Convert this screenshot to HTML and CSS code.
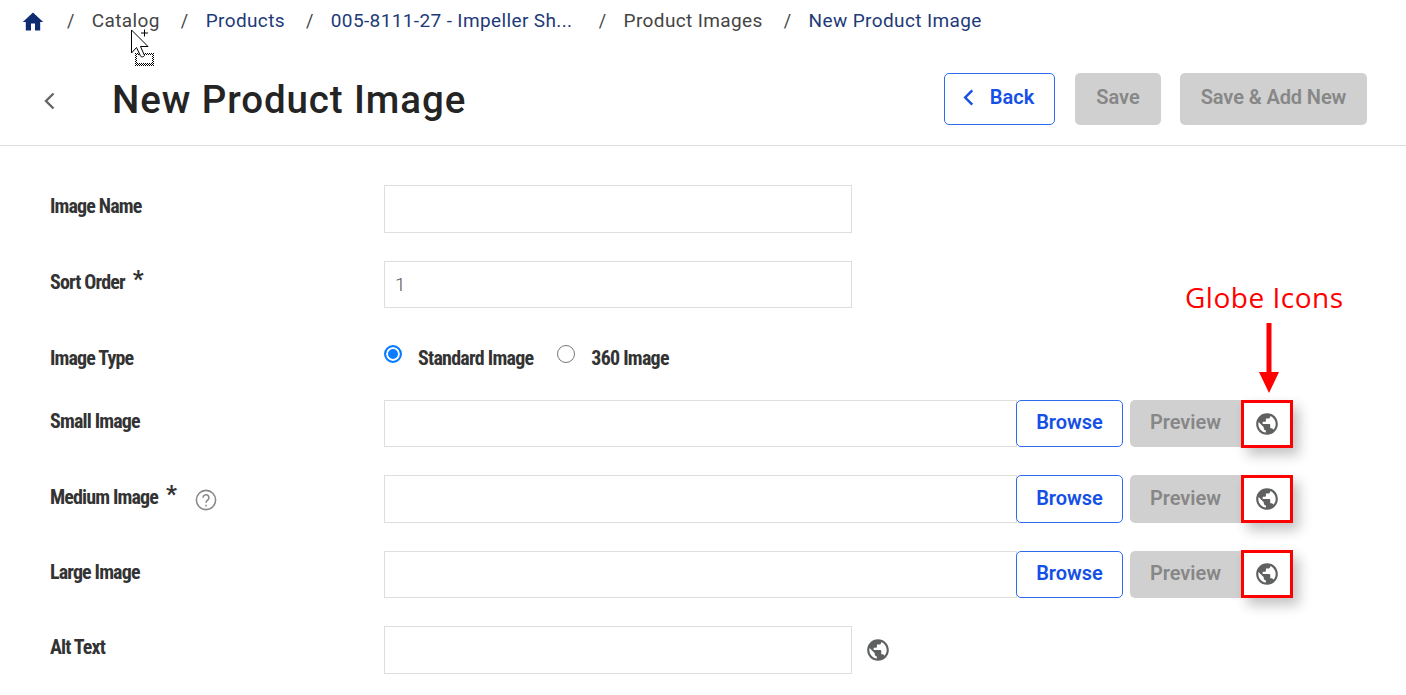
FILE: index.html
```html
<!DOCTYPE html>
<html lang="en">
<head>
<meta charset="utf-8">
<title>New Product Image</title>
<link rel="stylesheet" href="styles.css">
</head>
<body>
<nav class="crumbs">
  <svg class="home" viewBox="0 0 24 24"><path d="M10 20.500v-7h4v7h5.200v-8.500h3L12 2.500 1.800 12h3v8.500z"/></svg>
  <span class="sep sep-first">/</span>
  <span class="crumb plain">Catalog</span>
  <span class="sep">/</span>
  <a class="crumb">Products</a>
  <span class="sep">/</span>
  <a class="crumb long">005-8111-27 - Impeller Sh...</a>
  <span class="sep">/</span>
  <span class="crumb plain">Product Images</span>
  <span class="sep">/</span>
  <a class="crumb">New Product Image</a>
</nav>

<header class="head">
  <svg class="head-back" viewBox="0 0 12 18"><path d="M10 1.500 2.500 9l7.500 7.500"/></svg>
  <h1 class="title">New Product Image</h1>
  <div class="actions">
    <button class="btn btn-outline btn-back"><svg class="btn-chev" viewBox="0 0 12 18"><path d="M10 1.500 2.500 9l7.500 7.500"/></svg>Back</button>
    <button class="btn btn-off btn-save">Save</button>
    <button class="btn btn-off btn-add">Save &amp; Add New</button>
  </div>
</header>

<main class="form">
  <div class="row">
    <label class="label">Image Name</label>
    <div class="input short"></div>
  </div>
  <div class="row">
    <label class="label">Sort Order <span class="req">*</span></label>
    <div class="input short value">1</div>
  </div>
  <div class="row row-radio">
    <label class="label">Image Type</label>
    <div class="radios">
      <span class="radio on"></span><span class="radio-text first">Standard Image</span>
      <span class="radio"></span><span class="radio-text">360 Image</span>
    </div>
  </div>
  <div class="row">
    <label class="label">Small Image</label>
    <div class="input long"></div>
    <button class="btn btn-outline btn-browse">Browse</button>
    <button class="btn btn-off btn-preview">Preview</button>
    <span class="globe-box"><svg class="globe" viewBox="0 0 24 24"><path d="M12 2C6.480 2 2 6.480 2 12s4.480 10 10 10 10-4.480 10-10S17.520 2 12 2zm-1 17.930c-3.950-.490-7-3.850-7-7.930 0-.620.080-1.210.210-1.790L9 15v1c0 1.100.900 2 2 2v1.930zm6.900-2.540c-.260-.810-1-1.390-1.900-1.390h-1v-3c0-.550-.450-1-1-1H8v-2h2c.550 0 1-.450 1-1V7h2c1.100 0 2-.900 2-2v-.410c2.930 1.190 5 4.060 5 7.410 0 2.080-.800 3.970-2.100 5.390z"/></svg></span>
  </div>
  <div class="row">
    <label class="label">Medium Image <span class="req">*</span>
      <svg class="help" viewBox="0 0 24 24"><circle cx="12" cy="12" r="10.500"/><path d="M8.800 9.500a3.200 3.200 0 1 1 5 2.600c-1.200.8-1.800 1.400-1.800 3"/><path d="M12 17.200v1.800"/></svg>
    </label>
    <div class="input long"></div>
    <button class="btn btn-outline btn-browse">Browse</button>
    <button class="btn btn-off btn-preview">Preview</button>
    <span class="globe-box"><svg class="globe" viewBox="0 0 24 24"><path d="M12 2C6.480 2 2 6.480 2 12s4.480 10 10 10 10-4.480 10-10S17.520 2 12 2zm-1 17.930c-3.950-.490-7-3.850-7-7.930 0-.620.080-1.210.210-1.790L9 15v1c0 1.100.900 2 2 2v1.930zm6.900-2.540c-.260-.810-1-1.390-1.900-1.390h-1v-3c0-.550-.450-1-1-1H8v-2h2c.550 0 1-.450 1-1V7h2c1.100 0 2-.900 2-2v-.410c2.930 1.190 5 4.060 5 7.410 0 2.080-.800 3.970-2.100 5.390z"/></svg></span>
  </div>
  <div class="row">
    <label class="label">Large Image</label>
    <div class="input long"></div>
    <button class="btn btn-outline btn-browse">Browse</button>
    <button class="btn btn-off btn-preview">Preview</button>
    <span class="globe-box"><svg class="globe" viewBox="0 0 24 24"><path d="M12 2C6.480 2 2 6.480 2 12s4.480 10 10 10 10-4.480 10-10S17.520 2 12 2zm-1 17.930c-3.950-.490-7-3.850-7-7.930 0-.620.080-1.210.210-1.790L9 15v1c0 1.100.900 2 2 2v1.930zm6.900-2.540c-.260-.810-1-1.390-1.900-1.390h-1v-3c0-.550-.450-1-1-1H8v-2h2c.550 0 1-.450 1-1V7h2c1.100 0 2-.900 2-2v-.410c2.930 1.190 5 4.060 5 7.410 0 2.080-.800 3.970-2.100 5.390z"/></svg></span>
  </div>
  <div class="row">
    <label class="label">Alt Text</label>
    <div class="input short"></div>
    <svg class="globe globe-plain" viewBox="0 0 24 24"><path d="M12 2C6.480 2 2 6.480 2 12s4.480 10 10 10 10-4.480 10-10S17.520 2 12 2zm-1 17.930c-3.950-.490-7-3.850-7-7.930 0-.620.080-1.210.210-1.790L9 15v1c0 1.100.900 2 2 2v1.930zm6.900-2.540c-.260-.810-1-1.390-1.900-1.390h-1v-3c0-.550-.450-1-1-1H8v-2h2c.550 0 1-.450 1-1V7h2c1.100 0 2-.900 2-2v-.410c2.930 1.190 5 4.060 5 7.410 0 2.080-.800 3.970-2.100 5.390z"/></svg>
  </div>
</main>

<div class="note">Globe Icons</div>
<svg class="note-arrow" viewBox="0 0 22 70"><path d="M8.500 0h5v49h7.500L11 70 1 49h7.500z"/></svg>

<svg class="cursor" viewBox="0 0 26 40">
  <defs>
    <pattern id="dither" width="2" height="2" patternUnits="userSpaceOnUse">
      <rect width="1" height="1" fill="#000"/>
      <rect x="1" y="1" width="1" height="1" fill="#000"/>
    </pattern>
  </defs>
  <rect class="cursor-drag" x="4" y="24" width="19" height="13"/>
  <rect class="cursor-hole" x="6" y="26" width="15" height="8"/>
  <path class="cursor-arrow" d="M.5 1v23l5-5.500 4 8.500c.5 1.500 3.500 1 4-.5l-4-9h7.500z"/>
  <path class="cursor-plus" d="M13.500 .5v7M10 4h7"/>
</svg>
</body>
</html>
```

FILE: styles.css
```css
* { box-sizing: border-box; }
html, body { margin: 0; padding: 0; }
body {
  position: relative;
  height: 695px;
  overflow: hidden;
  background: #fff;
  font-family: Roboto, "Liberation Sans", sans-serif;
  color: #2b2b2b;
}

/* breadcrumb */
.crumbs {
  display: flex;
  align-items: center;
  height: 40px;
  padding-left: 21px;
  font-size: 19px;
  letter-spacing: .38px;
  color: #1e3a78;
}
.home { width: 24px; height: 24px; margin-top: 3px; fill: #0f2c70; }
.sep { margin: 0 17px 0 21px; color: #444; font-size: 18px; }
.sep-first { margin-left: 22px; }
.crumb { white-space: nowrap; }
.crumb.plain { color: #444; }
.crumb.long { width: 247px; }

/* header */
.head {
  display: flex;
  align-items: center;
  height: 106px;
  padding: 12px 39px 0 42px;
  border-bottom: 1px solid #dcdcdc;
}
.head-back { width: 15px; height: 18px; margin-top: 5px; fill: none; stroke: #666; stroke-width: 2.400; }
.title {
  margin: 2px 0 0 55px;
  font-size: 38.500px;
  font-weight: 500;
  letter-spacing: .9px;
  color: #242424;
}
.actions { display: flex; margin-left: auto; gap: 20px; }
.btn {
  display: inline-flex;
  align-items: center;
  justify-content: center;
  height: 52px;
  padding: 0 0 3px;
  border: 1px solid transparent;
  border-radius: 5px;
  font-family: inherit;
  font-size: 20px;
  font-weight: 600;
  letter-spacing: 0;
}
.btn-outline { background: #fff; border-color: #2f6bf0; color: #1450e6; }
.btn-off { background: #d0d0d0; color: #878787; }
.btn-back { width: 111px; padding-right: 3px; }
.btn-chev { width: 13px; height: 17px; margin-right: 15px; fill: none; stroke: #1450e6; stroke-width: 2.600; }
.btn-save { width: 86px; }
.btn-add { width: 187px; margin-left: -1px; letter-spacing: -.1px; }

/* form */
.form { display: flex; flex-direction: column; gap: 28px; padding: 39.300px 0 0 50px; }
.row { display: flex; align-items: center; height: 47.400px; }
.row-radio { height: 35.900px; }
.label {
  display: flex;
  align-items: center;
  flex: none;
  width: 334px;
  padding-bottom: 5px;
  font-size: 20px;
  font-stretch: 75%;
  font-weight: 700;
  letter-spacing: -.85px;
  color: #333;
}
.row-radio .label { padding: 7px 0 0; }
.req { margin: 0 0 6px 8px; font-size: 24px; }
.help { width: 22px; height: 22px; margin: 6px 0 0 19px; fill: none; stroke: #888; stroke-width: 1.700; }
.input { height: 100%; border: 1px solid #dedede; background: #fff; }
.input.short { width: 468px; }
.input.long { width: 633px; }
.value { display: flex; align-items: center; padding-left: 10px; font-size: 19px; font-weight: 300; color: #555; }
.btn-browse { width: 107px; height: 47.400px; margin-left: -1px; }
.btn-preview { width: 111px; height: 47.400px; margin-left: 7px; border-radius: 5px 0 0 5px; }
.globe-box {
  display: flex;
  align-items: center;
  justify-content: center;
  width: 52px;
  height: 48px;
  border: 3px solid #f00;
  box-shadow: 6px 7px 12px rgba(0, 0, 0, .24);
}
.globe { width: 26px; height: 26px; fill: #5f6060; }
.globe-plain { margin-left: 13px; }

/* radios */
.radios { display: flex; align-items: center; font-size: 20px; font-stretch: 75%; font-weight: 700; letter-spacing: -.75px; color: #333; }
.radio { width: 18px; height: 18px; border: 1.500px solid #777; border-radius: 50%; background: #fff; }
.radio.on { border: 2px solid #0a7cff; box-shadow: inset 0 0 0 2px #fff; background: #0a7cff; }
.radio-text { margin: 7px 0 0 16px; }
.radio-text.first { margin-right: 24px; }

/* annotation overlays */
.note {
  position: absolute;
  left: 1185px;
  top: 278px;
  font-family: "Open Sans", sans-serif;
  font-size: 28px;
  letter-spacing: .5px;
  color: #f00;
  white-space: nowrap;
}
.note-arrow { position: absolute; left: 1258px; top: 323px; width: 22px; height: 70px; fill: #f00; }
.cursor { position: absolute; left: 131px; top: 29px; width: 26px; height: 40px; }
.cursor-arrow { fill: #fff; stroke: #000; stroke-width: 1; }
.cursor-plus { fill: none; stroke: #000; stroke-width: 1; }
.cursor-drag { fill: url(#dither); }
.cursor-hole { fill: #fff; }
```
